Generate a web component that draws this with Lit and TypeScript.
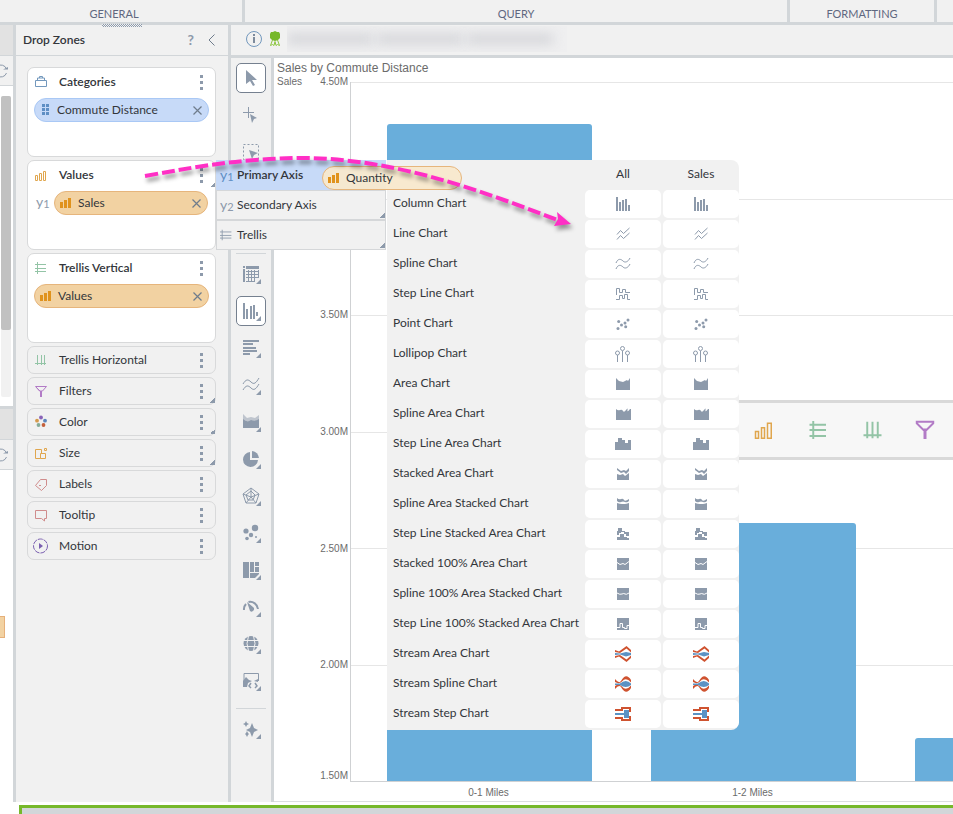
import { LitElement, html, svg, css, nothing, type TemplateResult, type SVGTemplateResult } from "lit";
import { customElement } from "lit/decorators.js";
import { classMap } from "lit/directives/class-map.js";
import { styleMap } from "lit/directives/style-map.js";

const icon = (body: SVGTemplateResult, size = 16, cls = "slate"): TemplateResult =>
  html`<svg class="icon ${cls}" width=${size} height=${size} viewBox="0 0 16 16" aria-hidden="true">${body}</svg>`;

/* ---------- field and drop-zone icons ---------- */
const filledBars = html`<svg class="icon amber" width="11" height="10" viewBox="0 0 11 10" aria-hidden="true">
  <path d="M0 4h3v6H0zM4 2h3v8H4zM8 0h3v10H8z" /></svg>`;
const dotsField = html`<svg class="icon blue" width="8" height="12" viewBox="0 0 8 12" aria-hidden="true">
  <path d="M0 0h3v3H0zM4 0h3v3H4zM0 4h3v3H0zM4 4h3v3H4zM0 8h3v3H0zM4 8h3v3H4z" /></svg>`;
const briefcase = svg`<path class="s-blue" d="M2.5 6.5h11v6h-11zM4.5 6v-2h7v2M6.500 4v-1.500h3v1.500" />`;
const outlineBars = svg`<path class="s-gold" d="M2.500 8.500h2v5h-2zM6.500 6.500h2v7h-2zM10.500 4.500h2v9h-2z" />`;
const trellisV = svg`<path class="s-green" d="M2 4.500h11M2 8.500h11M2 11.500h11M4.500 2v12" />`;
const trellisH = svg`<path class="s-green" d="M4.500 3v10M8.500 3v10M11.500 3v10M2 11.500h11" />`;
const funnel = svg`<path class="s-purple" d="M2.500 3.500h11l-4 4.500h-3zM3 4l4 4" /><path fill="#b27bc6" d="M7 8h2v6H7z" />`;
const palette = svg`<circle cx="8" cy="3.500" r="1.900" fill="#8a63b8" /><circle cx="12" cy="6.700" r="1.900" fill="#5b86bd" />
  <circle cx="10.500" cy="11" r="1.900" fill="#c4603c" /><circle cx="5.500" cy="11" r="1.900" fill="#85ab98" />
  <circle cx="4" cy="6.700" r="1.900" fill="#d69a4c" />`;
const sizeIcon = svg`<path class="s-gold" d="M8.500 4.500h-6v9h5M8.500 4.500v4M7.500 8.500h5v5h-5zM11.500 3.500h2v2h-2z" />`;
const tag = svg`<path class="s-rose" d="M2.500 9.500l5-6h6v6l-5 5zM6 9.500h2M7 9v1" />`;
const bubble = svg`<path class="s-rose" d="M2.500 3.500h11v8h-2v2.500l-3-2.500h-6z" />`;
const motion = svg`<circle class="s-violet" cx="7.500" cy="8" r="7" stroke-dasharray="5 1" /><path fill="#7a5fb0" d="M6 5l4 3-4 3z" />`;

/* ---------- toolbar icons ---------- */
const corner = svg`<path d="M19 14v5h-5z" />`;
const tool = (body: SVGTemplateResult, more = true): TemplateResult =>
  html`<svg class="icon slate" width="20" height="20" viewBox="0 0 20 20" aria-hidden="true">${body}${more ? corner : nothing}</svg>`;

const tools: { label: string; pic: TemplateResult; active?: boolean; end?: boolean }[] = [
  { label: "Select", active: true, pic: tool(svg`<path d="M4 1v14l4-3 3 5 2-1-3-5h5z" />`, false) },
  { label: "Point select", pic: tool(svg`<path class="s" d="M1 6.500h11M6.500 1v11" /><path d="M8 8l7 4-3 1-2 4z" />`, false) },
  { label: "Box select", pic: tool(svg`<path class="s" stroke-dasharray="2 2" d="M1.500 1.500h15v15h-15z" /><path d="M7 7l9 3-4 2-2 4z" />`, false) },
  { label: "Lasso", pic: tool(svg`<circle class="s" cx="9" cy="9" r="6" />`, false) },
  { label: "Pan", end: true, pic: tool(svg`<path class="s" d="M2 9h14M9 2v14" />`, false) },
  { label: "Grid", pic: tool(svg`<path d="M1 1h2v2H1zM4 1h13v3H4zM1 4h2v13H1z" /><path class="s" d="M4 6.500h13M4 9.500h13M4 12.500h13M4 16.500h9M6.500 5v12M9.500 5v12M12.500 5v12M16.500 5v8" />`) },
  { label: "Column charts", active: true, pic: tool(svg`<path d="M1 1h2v16H1zM4 7h2v10H4zM8 4h2v13H8zM11 3h2v14h-2zM14 10h2v4h-2z" />`) },
  { label: "Bar charts", pic: tool(svg`<path d="M1 1h16v2H1zM1 4h10v2H1zM1 8h13v2H1zM1 11h14v2H1zM1 14h7v2H1z" />`) },
  { label: "Line charts", pic: tool(svg`<path class="s" d="M1 8C4 3 6 3 9 6s5 1 8-4M1 14C4 9 6 9 9 12s5 1 8-4" />`) },
  { label: "Area charts", pic: tool(svg`<path opacity=".5" d="M1 1l4 4 4-1 4 1 4-3v6H1z" /><path d="M1 6q4 4 8 1 4 2 8-1v9H1z" />`) },
  { label: "Pie charts", pic: tool(svg`<path d="M8 2v8h8A7.500 7.500 0 1 1 8 2z" /><path d="M10 1a7.500 7.500 0 0 1 7 7h-7z" />`) },
  { label: "Radar charts", pic: tool(svg`<path class="s" d="M9 1l8 6-3 9H4L1 7zM9 4l4 4-2 5H6L4 8zM9 1v9M17 7l-8 3M14 16l-5-6-5 6M1 7l8 3" />`) },
  { label: "Scatter charts", pic: tool(svg`<circle cx="13" cy="4" r="3.200" /><circle cx="4" cy="7" r="2.600" /><circle cx="9" cy="11" r="2.200" /><circle cx="5" cy="14.500" r="1.800" /><circle cx="14" cy="13" r="1" />`) },
  { label: "Tree map", pic: tool(svg`<path d="M1 1h6v16H1zM8 1h4v10H8zM13 1h4v4h-4zM13 6h4v5h-4zM8 12h9v1l-4 4H8z" />`) },
  { label: "Gauges", pic: tool(svg`<path class="s2" d="M2 12a7.500 7.500 0 0 1 2-6M6.500 4a8 8 0 0 1 9.500 7" /><path d="M5 4l6 5a2.200 2.200 0 1 1-3 4z" />`) },
  { label: "Maps", pic: tool(svg`<circle cx="9" cy="8.500" r="7.500" /><path stroke="#f1f1f1" fill="none" d="M1 5.500h16M1 11.500h16M6.500 1q-3 7.500 0 15M11.500 1q3 7.500 0 15" />`) },
  { label: "Custom visuals", end: true, pic: tool(svg`<path class="s" d="M2 14V1.500h14.500V9" /><path class="s" stroke-width="1.500" d="M9 11l-2 3 2 2M13 11l2 3-2 2" /><path d="M1 15V9l3-4 3 3 3 1-4 2-1 4zM12 9l4-2v3z" />`) },
  { label: "Assistant", pic: tool(svg`<path d="M10 3l2 5 4 2-4 2-2 5-2-5-4-2 4-2zM4 1l1 2 2 1-2 1-1 2-1-2-2-1 2-1zM5 11l1 2 1 1-1 1-1 2-1-2-1-1 1-1z" />`) },
];

/* ---------- chart type icons ---------- */
const squareSplit = (d: string) => svg`<path d="M2 2h12v12H2z" /><path fill="none" stroke="#fff" d=${d} />`;
const chartTypes: { name: string; pic: SVGTemplateResult }[] = [
  { name: "Column Chart", pic: svg`<path d="M1 1h2v14H1zM4 6h2v9H4zM7 4h2v11H7zM10 3h2v12h-2zM13 9h2v6h-2z" />` },
  { name: "Line Chart", pic: svg`<path class="s" d="M2 8.500l3.500-4 3 3 6-5.500M2 13.500l3.500-4 3 3 6-5.500" />` },
  { name: "Spline Chart", pic: svg`<path class="s" d="M1 7C3 2 6 3 8 5s5 1 7-3M1 13C3 8 6 9 8 11s5 1 7-3" />` },
  { name: "Step Line Chart", pic: svg`<path class="s" d="M1.500 9V2.500h3v4h3v-3h3v3H15M1 13.500h3.500v-4h3v3h2v-4h3v5H15" />` },
  { name: "Point Chart", pic: svg`<circle cx="3.700" cy="5.500" r="1.500" /><circle cx="13" cy="4" r="1.500" /><circle cx="6.500" cy="9" r="1.500" /><circle cx="10" cy="7" r="1.500" /><circle cx="10.700" cy="10.700" r="1.500" /><circle cx="3" cy="12.500" r="1.500" />` },
  { name: "Lollipop Chart", pic: svg`<path class="s" d="M2.500 9v7M7.500 5v11M12.500 9v7" /><circle class="s" cx="2.500" cy="7" r="2" /><circle class="s" cx="7.500" cy="2.500" r="2" /><circle class="s" cx="12.500" cy="7" r="2" />` },
  { name: "Area Chart", pic: svg`<path d="M1 2l3 3 4 1 4-2 1 1 2-3v12H1z" />` },
  { name: "Spline Area Chart", pic: svg`<path d="M1 3q2 2 4 1t3 1 3-1 1.500 0 2.500-1h1.500v11H1z" />` },
  { name: "Step Line Area Chart", pic: svg`<path d="M0 6h3V2h4v2h3v3h3V4h3v10H0z" />` },
  { name: "Stacked Area Chart", pic: svg`<path d="M2 2l4 3 3-1 2 1 3-3v3l-3 3-2-2-3 1-4-3z" /><path d="M2 8l3 1 3-1 2 2 4-3v7H2z" />` },
  { name: "Spline Area Stacked Chart", pic: svg`<path d="M2 2q2 2 4 1t3 1 5-1v2q-2 2-4 1t-4 0-4-1z" /><path d="M2 7q3 1 5 1t3 0 4-1v7H2z" />` },
  { name: "Step Line Stacked Area Chart", pic: svg`<path d="M3 2h4v3h3v1h4v4h-3V8H9V6H6v1H4v2H2V5h1z" /><path d="M5 8h4v3h3v1h2v2H2v-3h3z" />` },
  { name: "Stacked 100% Area Chart", pic: squareSplit("M2 6.500l3 2 3-1 2 1 4-3") },
  { name: "Spline 100% Area Stacked Chart", pic: squareSplit("M2 7q3 2 5 1t3 0 4-1") },
  { name: "Step Line 100% Stacked Area Chart", pic: squareSplit("M2 11.500h3v-4h2.500v4h2v1H12v-3h2") },
  { name: "Stream Area Chart", pic: svg`<path class="red" d="M0 4l4 1.500L11.500 0 16 4v2.500L11.500 2.500 5 7 0 6zM0 12l4-1.500 7.500 5.500L16 12V9.500l-4.500 4L5 9l-5 1z" /><path fill="#5b92c4" d="M0 7l5 .500L11 6l5 1v2l-5 1.500-6-2L0 9z" />` },
  { name: "Stream Spline Chart", pic: svg`<path class="red" d="M0 3q4 5 6 2 5-9 10-1v2.500q-5-6-9-1-3 3-7 .500zM0 13q4-5 6-2 5 9 10 1V9.500q-5 6-9 1-3-3-7-.500z" /><path fill="#5b92c4" d="M0 7.500h5q6-5 11 0v1.500q-5 4-11 0H0z" />` },
  { name: "Stream Step Chart", pic: svg`<path fill="none" stroke="#cf5330" stroke-width="2" d="M0 4h7V2h8v4M0 12h7v2h8v-4" /><path fill="#5b92c4" d="M0 7h9V4h5v8H9V9H0z" />` },
];

const zones: { name: string; pic: SVGTemplateResult; more?: boolean }[] = [
  { name: "Trellis Horizontal", pic: trellisH },
  { name: "Filters", pic: funnel, more: true },
  { name: "Color", pic: palette, more: true },
  { name: "Size", pic: sizeIcon, more: true },
  { name: "Labels", pic: tag },
  { name: "Tooltip", pic: bubble },
  { name: "Motion", pic: motion },
];

const axisMin = 1.5;
const axisMax = 4.5;
const bars = [
  { label: "0-1 Miles", value: 4.32 },
  { label: "1-2 Miles", value: 2.607 },
  { label: "", value: 1.685 },
];
const ticks = ["4.50M", "4.00M", "3.50M", "3.00M", "2.50M"];

@customElement("app-root")
export class AppRoot extends LitElement {
  static styles = css`
    :host { display: flex; flex-direction: column; min-height: 100vh; position: relative; overflow: hidden; background: #fff; color: #33363b; font: 12px/16px Lato, "Open Sans", sans-serif; }
    * { box-sizing: border-box; }
    button { font: inherit; color: inherit; background: none; border: 0; padding: 0; margin: 0; }
    h1, h2 { margin: 0; font-size: 12px; line-height: 16px; font-weight: 600; }
    .icon { display: block; flex: none; }
    .slate { fill: #8d9aab; stroke: none; }
    .amber { fill: #e0921c; }
    .blue { fill: #5f8fc4; }
    .red { fill: #cf5330; }
    .s, .s2, .s-blue, .s-gold, .s-green, .s-purple, .s-rose, .s-violet { fill: none; stroke: #8d9aab; }
    .s2 { stroke-width: 2; }
    .s-blue { stroke: #7398bd; }
    .s-gold { stroke: #e0a64e; }
    .s-green { stroke: #93c4a6; }
    .s-purple { stroke: #b27bc6; }
    .s-rose { stroke: #d08c8c; }
    .s-violet { stroke: #7a5fb0; }

    .ribbon { display: grid; grid-template-columns: 245px 1fr 147px 16px; height: 25px; background: #f1f1f1; border-bottom: 3px solid #d2d6d9; }
    .group { display: flex; align-items: center; justify-content: center; padding-top: 6px; border-right: 3px solid #d2d6d9; color: #5f6780; font-size: 11px; }
    .group:first-child { padding-right: 14px; }
    .group:last-child { border-right: 0; }

    .work { flex: 1; display: flex; }
    .sliver { width: 13px; flex: none; display: flex; flex-direction: column; overflow: hidden; }
    .sliver-head { height: 30px; background: #e2e2e2; }
    .sliver-bar { height: 31px; display: flex; align-items: center; background: #f1f1f1; border-top: 1px solid #d2d6d9; border-bottom: 1px solid #d2d6d9; }
    .sliver-bar .icon { margin-left: -7px; }
    .track { height: 301px; margin: 10px 2px 9px 1px; background: #f1f1f1; border-radius: 2px; }
    .thumb { height: 234px; background: #c1c1c1; border-radius: 2px; }
    .sliver-low { border-top: 3px solid #d2d6d9; }
    .chip-edge { width: 5px; height: 22px; margin-top: 146px; background: #f2d2a2; border: 1px solid #e6b07a; border-left: 0; }

    .zones { width: 218px; flex: none; display: flex; flex-direction: column; background: #f1f1f1; border: solid #d2d6d9; border-width: 0 3px; }
    .zones-head { height: 31px; display: flex; align-items: center; gap: 14px; padding: 0 12px 0 7px; border-bottom: 1px solid #d2d6d9; position: relative; }
    .zones-head h1 { flex: 1; }
    .grip { position: absolute; top: -1px; left: 86px; width: 40px; height: 3px; background: repeating-conic-gradient(#8d9aab 0 25%, #f1f1f1 0 50%) 0 0 / 2px 2px; }
    .help { font-weight: 700; font-size: 14px; color: #8d9aab; }
    .zone-list { display: flex; flex-direction: column; gap: 3px; padding: 11px 12px 11px 11px; }
    .card { position: relative; min-height: 28px; border: 1px solid #d8d9da; border-radius: 7px; }
    .card.open { height: 90px; background: #fff; }
    .card.plain h2 { font-weight: 400; }
    .card-head { display: flex; align-items: center; height: 26px; padding: 0 11px 0 5px; gap: 10px; }
    .open .card-head { height: 28px; }
    .card-head h2 { flex: 1; }
    .kebab { width: 5px; display: grid; gap: 3px; justify-items: center; }
    .kebab i { width: 3px; height: 3px; background: #8d9aab; }
    .more { position: absolute; right: 0; bottom: 1px; width: 5px; height: 5px; background: linear-gradient(135deg, transparent 50%, #8d9aab 50%); }
    .values > .more { bottom: 62px; }
    .pill { display: flex; align-items: center; gap: 7px; height: 24px; margin: 2px 6px 0; padding: 0 6px 0 7px; border-radius: 12px; border: 1px solid #a9c8f5; background: #c7daf8; }
    .pill span { flex: 1; }
    .pill.tan { padding-left: 5px; border-color: #e6b57c; background: #f2d2a2; }
    .pill-row { display: flex; align-items: center; padding-left: 8px; }
    .pill-row .pill { flex: 1; margin-left: 4px; margin-right: 7px; }
    .axis-mark { width: 14px; flex: none; color: #8d9aab; font-size: 14px; line-height: 16px; }
    .axis-mark sub { font-size: 11px; line-height: 1px; vertical-align: -1px; }

    .flyout { position: absolute; z-index: 5; left: 188px; top: -1px; display: flex; align-items: flex-start; }
    .axes { width: 170px; margin-right: 1px; background: #f1f1f1; }
    .axes button { display: flex; align-items: center; gap: 3px; position: relative; width: 100%; height: 30px; padding: 0 3px; border: 1px solid #d5d7d9; text-align: left; }
    .axes .chosen { background: #c7daf8; border-color: #c7daf8; font-weight: 600; }
    .axes .chosen .axis-mark { color: #5f8fc4; font-weight: 400; }
    .pill.drag { position: absolute; left: 106px; top: 6px; width: 140px; margin: 0; background: #f9e8cdee; }
    .types { width: 352px; border-collapse: collapse; background: #f1f1f1; border-radius: 0 8px 8px 0; table-layout: fixed; overflow: hidden; }
    .types th, .types td { padding: 0; font-weight: 400; }
    .types th { height: 30px; }
    .types tbody th { text-align: left; padding: 0 0 4px 6px; white-space: nowrap; }
    .types thead th { padding-bottom: 2px; }
    .types thead th:first-child { width: 198px; }
    .types thead th:nth-child(2) { width: 78px; padding-right: 2px; }
    .types td button { display: grid; place-items: center; width: 76px; height: 28px; margin-bottom: 2px; background: #fff; border-radius: 5px; }

    .main { flex: 1; min-width: 0; display: flex; flex-direction: column; }
    .info { height: 33px; display: flex; align-items: center; gap: 3px; padding: 0 14px 2px; background: #f1f1f1; border-bottom: 3px solid #d2d6d9; }
    .redacted { width: 280px; height: 26px; overflow: hidden; display: flex; gap: 4px; align-items: center; background: #efeff0; }
    .redacted i { width: 86px; height: 10px; background: #d3d4d8; filter: blur(6px); }
    .stage { flex: 1; display: flex; }
    .tools { width: 43px; flex: none; padding: 5px 5px 0; background: #f1f1f1; border-right: 3px solid #d2d6d9; }
    .tools button { display: grid; place-items: center; width: 30px; height: 30px; margin-bottom: 7px; padding: 2px 0 0 2px; border-radius: 5px; border: 1px solid transparent; }
    .tools .active { background: #fff; border-color: #75808f; }
    .rule { height: 1px; margin: 12px 0 5px; background: #d2d6d9; }

    .chart { flex: 1; min-width: 0; display: grid; grid-template-columns: 71px 1fr; grid-template-rows: 24px 1fr 19px; column-gap: 2px; padding-left: 3px; border-bottom: 1px solid #dcdee0; background: #fff; color: #6b6b6b; font: 10px/12px "Liberation Sans", Arial, sans-serif; overflow: hidden; }
    .chart-title { grid-column: 1 / 3; font-size: 12px; line-height: 20px; font-weight: 400; }
    .scale { display: flex; flex-direction: column; margin: -6px 0 6px; text-align: right; }
    .scale div { flex: 1; display: flex; flex-direction: column; }
    .scale .top { flex-direction: row; justify-content: space-between; }
    .scale .last { justify-content: space-between; }
    .scale .last span:last-child { margin-bottom: -6px; }
    .plot { display: grid; border: solid #cfd1d3; border-width: 0 0 1px 1px; overflow: hidden; }
    .lines, .columns { grid-area: 1 / 1; }
    .lines { display: flex; flex-direction: column; }
    .lines i { flex: 1; border-top: 1px solid #e6e6e6; }
    .columns { display: flex; align-items: flex-end; gap: 59px; padding-left: 36px; }
    .column { width: 205px; flex: none; background: #69aedb; border-radius: 3px 3px 0 0; }
    .names { grid-column: 2; display: flex; gap: 59px; padding: 5px 0 0 36px; }
    .names span { width: 205px; flex: none; text-align: center; }

    .strip { position: absolute; z-index: 2; left: 600px; right: 0; top: 400px; height: 60px; display: flex; align-items: center; gap: 30px; padding-left: 151px; background: #f7f7f7; border: solid #d9d9d9; border-width: 3px 0; overflow: hidden; }
    .arrow { position: absolute; z-index: 8; left: 140px; top: 150px; pointer-events: none; filter: drop-shadow(2px 4px 2px #0006); }
    .dock { height: 9px; margin: 3px 0 0 19px; background: #d2d6d9; border: solid #76b82a; border-width: 3px 0 0 3px; }
  `;

  private kebab(name: string) {
    return html`<button class="kebab" aria-label="${name} options"><i></i><i></i><i></i></button>`;
  }

  private close(name: string) {
    return html`<button aria-label="Remove ${name}">
      <svg class="icon" width="9" height="9" viewBox="0 0 9 9"><path fill="none" stroke="#6f7c8c" stroke-width="1.200" d="M.500.500l8 8M8.500.500l-8 8" /></svg>
    </button>`;
  }

  private pill(name: string, tan = true) {
    return html`<div class=${classMap({ pill: true, tan })}>${tan ? filledBars : dotsField}<span>${name}</span>${this.close(name)}</div>`;
  }

  private head(name: string, pic: SVGTemplateResult) {
    return html`<div class="card-head">${icon(pic)}<h2>${name}</h2>${this.kebab(name)}</div>`;
  }

  private flyout() {
    return html`<div class="flyout">
      <div class="axes">
        <button class="chosen"><span class="axis-mark">y<sub>1</sub></span>Primary Axis</button>
        <button><span class="axis-mark">y<sub>2</sub></span>Secondary Axis<i class="more"></i></button>
        <button>${icon(svg`<path class="s" d="M0 4.500h13M0 8.500h13M0 11.500h13M2.500 2v12" />`, 14)}Trellis<i class="more"></i></button>
      </div>
      <table class="types">
        <thead><tr><th></th><th scope="col">All</th><th scope="col">Sales</th></tr></thead>
        <tbody>
          ${chartTypes.map((t) => html`<tr>
            <th scope="row">${t.name}</th>
            <td><button aria-label="${t.name}, all">${icon(t.pic)}</button></td>
            <td><button aria-label="${t.name}, Sales">${icon(t.pic)}</button></td>
          </tr>`)}
        </tbody>
      </table>
      <div class="pill tan drag">${filledBars}<span>Quantity</span></div>
    </div>`;
  }

  private sliverBar() {
    return html`<div class="sliver-bar">${icon(svg`<path class="s" d="M13.500 6A6 6 0 1 0 13.500 10" /><path d="M10 6.500h5V4z" />`)}</div>`;
  }

  render() {
    return html`
      <nav class="ribbon">
        <div class="group">GENERAL</div><div class="group">QUERY</div><div class="group">FORMATTING</div><div class="group"></div>
      </nav>
      <div class="work">
        <div class="sliver">
          <div class="sliver-head"></div>${this.sliverBar()}
          <div class="track"><div class="thumb"></div></div>
          <div class="sliver-low">
            <div class="sliver-head"></div>${this.sliverBar()}
            <div class="chip-edge"></div>
          </div>
        </div>
        <aside class="zones">
          <header class="zones-head">
            <i class="grip"></i><h1>Drop Zones</h1>
            <button class="help">?</button>
            <button aria-label="Collapse"><svg class="icon" width="8" height="12" viewBox="0 0 8 12"><path fill="none" stroke="#6f7c8c" d="M6.500.500L1 6l5.500 5.500" /></svg></button>
          </header>
          <div class="zone-list">
            <section class="card open">${this.head("Categories", briefcase)}${this.pill("Commute Distance", false)}</section>
            <section class="card open values">
              ${this.head("Values", outlineBars)}
              <div class="pill-row"><span class="axis-mark">y<sub>1</sub></span>${this.pill("Sales")}</div>
              <i class="more"></i>
              ${this.flyout()}
            </section>
            <section class="card open">${this.head("Trellis Vertical", trellisV)}${this.pill("Values")}</section>
            ${zones.map((z) => html`<section class="card plain">${this.head(z.name, z.pic)}${z.more ? html`<i class="more"></i>` : nothing}</section>`)}
          </div>
        </aside>
        <main class="main">
          <div class="info">
            <svg class="icon" width="18" height="18" viewBox="0 0 18 18" aria-hidden="true"><circle class="s-blue" cx="9" cy="9" r="7.500" /><path fill="#7d8b9d" d="M8 4h2v2H8zM8 7h2v6H8z" /></svg>
            <svg class="icon" width="18" height="18" viewBox="0 0 18 18" aria-hidden="true"><path fill="#76b82a" d="M9 1l2 1 2 0 1 2 0 2 0 2-2 2-3 1-3-1-2-2V4l1-2h2z" /><path fill="none" stroke="#8cc63f" d="M6.500 10L4.500 15.500l2-1 1.500 1 1-4 1 4 1.500-1 2 1L11.500 10" /></svg>
            <div class="redacted"><i></i><i></i><i></i></div>
          </div>
          <div class="stage">
            <div class="tools">
              ${tools.map((t) => html`<button class=${classMap({ active: !!t.active })} aria-label=${t.label}>${t.pic}</button>${t.end ? html`<div class="rule"></div>` : nothing}`)}
            </div>
            <div class="chart">
              <h2 class="chart-title">Sales by Commute Distance</h2>
              <div class="scale">
                ${ticks.map((t, i) => html`<div class=${classMap({ top: i === 0 })}>${i === 0 ? html`<span>Sales</span>` : nothing}<span>${t}</span></div>`)}
                <div class="last"><span>2.00M</span><span>1.50M</span></div>
              </div>
              <div class="plot">
                <div class="lines"><i></i><i></i><i></i><i></i><i></i><i></i></div>
                <div class="columns">
                  ${bars.map((b) => html`<div class="column" style=${styleMap({ height: `${((b.value - axisMin) / (axisMax - axisMin)) * 100}%` })}></div>`)}
                </div>
              </div>
              <div class="names">${bars.map((b) => html`<span>${b.label}</span>`)}</div>
            </div>
          </div>
        </main>
      </div>
      <div class="strip">
        ${icon(svg`<path class="s-gold" d="M3 9h2v4.500H3zM7 6.500h2v7H7zM11 3.500h2.500v10H11z" />`, 24)}
        ${icon(svg`<path class="s-green" stroke-width="1.300" d="M3 4.500h11M3 8h11M3 12h11M5.500 2v12" />`, 24)}
        ${icon(svg`<path class="s-green" stroke-width="1.300" d="M5.500 2.500v11M9 2.500v11M12.500 2.500v11M3 11.500h12" />`, 24)}
        ${icon(svg`<path class="s-purple" stroke-width="1.300" d="M2.500 2.500h11v1L9 8H7L2.500 3.500z" /><path class="s-purple" stroke-width="2" d="M8 7v7" />`, 24)}
      </div>
      <svg class="arrow" width="440" height="90" viewBox="0 0 440 90" aria-hidden="true">
        <path fill="none" stroke="#ff2fc5" stroke-width="4" stroke-dasharray="13 4" d="M5 26C60 16 105 8 165 8C255 9 340 40 420 71" />
        <path fill="#ff2fc5" d="M431 74l-14-12 1 7-4 7z" />
      </svg>
      <footer class="dock"></footer>
    `;
  }
}
